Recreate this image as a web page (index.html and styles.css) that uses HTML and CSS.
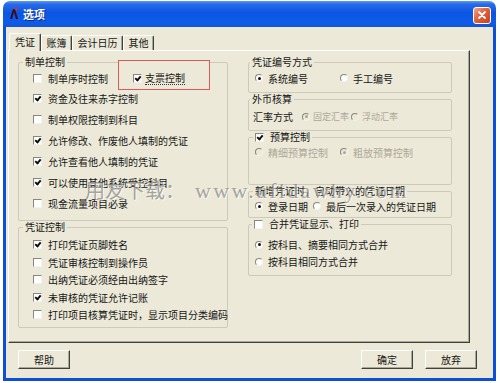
FILE: index.html
```html
<!DOCTYPE html>
<html>
<head>
<meta charset="utf-8">
<title>选项</title>
<link rel="stylesheet" href="styles.css">
</head>
<body>
<div class="window">
  <div class="titlebar">
    <svg class="app-icon" viewBox="0 0 10 12"><path d="M1 11 L4 1 L6 1 L9 11 L7 11 L5 4 L3 11 Z" fill="#3a0a1a"/><path d="M5 1 L9 0 L8 3 Z" fill="#e03030"/></svg>
    <span class="title">选项</span>
    <span class="close"><svg viewBox="0 0 10 10"><path d="M2 2L8 8M8 2L2 8" stroke="#fff" stroke-width="1.8" stroke-linecap="round"/></svg></span>
  </div>
  <div class="frame">
    <div class="tabs">
      <div class="tab sel">凭证</div><div class="tab">账簿</div><div class="tab">会计日历</div><div class="tab">其他</div>
    </div>
    <div class="panel">
      <div class="col col-left">
        <fieldset class="g g1">
          <legend>制单控制</legend>
          <div class="gbody">
            <div class="row first"><span class="item"><i class="cb"></i>制单序时控制</span><span class="item marked"><i class="cb on"></i><span class="focus">支票控制</span></span></div>
            <div class="row"><span class="item"><i class="cb on"></i>资金及往来赤字控制</span></div>
            <div class="row"><span class="item"><i class="cb"></i>制单权限控制到科目</span></div>
            <div class="row"><span class="item"><i class="cb on"></i>允许修改、作废他人填制的凭证</span></div>
            <div class="row"><span class="item"><i class="cb on"></i>允许查看他人填制的凭证</span></div>
            <div class="row"><span class="item"><i class="cb on"></i>可以使用其他系统受控科目</span></div>
            <div class="row"><span class="item"><i class="cb"></i>现金流量项目必录</span></div>
          </div>
        </fieldset>
        <fieldset class="g g2">
          <legend>凭证控制</legend>
          <div class="gbody">
            <div class="row"><span class="item"><i class="cb on"></i>打印凭证页脚姓名</span></div>
            <div class="row"><span class="item"><i class="cb"></i>凭证审核控制到操作员</span></div>
            <div class="row"><span class="item"><i class="cb"></i>出纳凭证必须经由出纳签字</span></div>
            <div class="row"><span class="item"><i class="cb on"></i>未审核的凭证允许记账</span></div>
            <div class="row"><span class="item"><i class="cb"></i>打印项目核算凭证时，显示项目分类编码</span></div>
          </div>
        </fieldset>
      </div>
      <div class="col col-right">
        <fieldset class="g r1">
          <legend>凭证编号方式</legend>
          <div class="gbody">
            <div class="row"><span class="item"><i class="rd on"></i>系统编号</span><span class="item next"><i class="rd"></i>手工编号</span></div>
          </div>
        </fieldset>
        <fieldset class="g r2">
          <legend>外币核算</legend>
          <div class="gbody">
            <div class="row"><span class="item rate-label">汇率方式</span><span class="item dis"><i class="rd on"></i>固定汇率</span><span class="item dis next"><i class="rd"></i>浮动汇率</span></div>
          </div>
        </fieldset>
        <fieldset class="g r3">
          <legend><span class="item"><i class="cb on"></i>预算控制</span></legend>
          <div class="gbody">
            <div class="row"><span class="item dis"><i class="rd"></i>精细预算控制</span><span class="item dis next"><i class="rd on"></i>粗放预算控制</span></div>
          </div>
        </fieldset>
        <fieldset class="g r4">
          <legend>新增凭证时，自动带入的凭证日期</legend>
          <div class="gbody">
            <div class="row"><span class="item"><i class="rd on"></i>登录日期</span><span class="item next"><i class="rd"></i>最后一次录入的凭证日期</span></div>
          </div>
        </fieldset>
        <fieldset class="g r5">
          <legend><span class="item"><i class="cb"></i>合并凭证显示、打印</span></legend>
          <div class="gbody">
            <div class="row"><span class="item"><i class="rd on"></i>按科目、摘要相同方式合并</span></div>
            <div class="row"><span class="item"><i class="rd"></i>按科目相同方式合并</span></div>
          </div>
        </fieldset>
      </div>
    </div>
    <div class="buttons">
      <span class="btn">帮助</span>
      <span class="spacer"></span>
      <span class="btn">确定</span>
      <span class="btn">放弃</span>
    </div>
  </div>
  <div class="watermark"><span class="wm-cn">用友下载：</span><span class="wm-en">www.ufidawhy.com</span></div>
</div>
</body>
</html>
```

FILE: styles.css
```css
* { box-sizing: border-box; }

body {
  margin: 0;
  background: #ffffff;
  font-family: "Noto Sans CJK SC", "Noto Sans", sans-serif;
  font-size: 10px;
  color: #161616;
}

.window {
  position: relative;
  margin: 1px 0 0 3px;
  width: 493px;
  height: 380px;
}

.titlebar {
  height: 26px;
  border-radius: 7px 7px 0 0;
  background: linear-gradient(to bottom, #5a9cf6 0%, #2a6ae8 12%, #0b56e2 45%, #0d5ce8 85%, #1454d2 100%);
  display: flex;
  align-items: center;
  padding: 0 5px 0 6px;
}

.app-icon {
  width: 10px;
  height: 12px;
  margin-right: 4px;
}

.title {
  flex: 1;
  color: #fff;
  font-weight: bold;
  font-size: 11px;
  text-shadow: 1px 1px 0 #0a2a8a;
}

.close {
  width: 18px;
  height: 17px;
  margin-top: 2px;
  border: 1px solid #fff;
  border-radius: 3px;
  background: linear-gradient(135deg, #f2a68a 0%, #e2603a 45%, #c8401c 100%);
  display: flex;
  align-items: center;
  justify-content: center;
}

.close svg {
  width: 10px;
  height: 10px;
}

.frame {
  height: 354px;
  border: 3px solid #0c4fd8;
  border-top: 0;
  background: #ECE9D8;
  display: flex;
  flex-direction: column;
}

.tabs {
  position: relative;
  z-index: 1;
  display: flex;
  align-items: flex-end;
  height: 17px;
  margin: 6px 0 0 3px;
}

.tab {
  height: 15px;
  padding: 0 4.5px;
  border: 1px solid;
  border-color: #ffffff #404040 transparent #ffffff;
  border-bottom: 0;
  border-radius: 2px 2px 0 0;
  box-shadow: inset -1px 0 0 #aca899;
  background: #ECE9D8;
  line-height: 14px;
  white-space: nowrap;
}

.tab.sel {
  height: 18px;
  margin-bottom: -1px;
  padding: 0 5px;
  line-height: 15px;
}

.panel {
  width: 462px;
  height: 293px;
  margin-left: 2px;
  border: 1px solid;
  border-color: #ffffff #404040 #404040 #ffffff;
  box-shadow: inset -1px -1px 0 #aca899;
  padding: 5px 0 0 9px;
  display: flex;
  gap: 20px;
}

.col {
  display: flex;
  flex-direction: column;
}

.col-left { width: 210px; }
.col-right { width: 204px; }

fieldset.g {
  margin: 0;
  padding: 0;
  min-width: 0;
  border: 1px solid #cdcabb;
  border-radius: 2px;
}

fieldset.g legend {
  padding: 0 2px;
  margin-left: 4px;
  height: 12px;
  line-height: 12px;
  font-size: 10px;
  white-space: nowrap;
}

.col-right fieldset.g legend { margin-left: 1px; }
.col-right fieldset.r3 legend,
.col-right fieldset.r4 legend { margin-left: 4px; }
.col-right fieldset.r5 legend { margin-left: 3px; }

.row {
  display: flex;
  height: 21px;
}

.item {
  display: flex;
  align-items: center;
  height: 100%;
  white-space: nowrap;
}

legend .item { height: 12px; }

/* left groups */
.g1 .gbody { padding: 0 0 6px 14px; }
.g1 .row.first { height: 20px; }

.g2 { margin-top: 7px; }
.g2 .gbody { padding: 3px 0 3px 14px; }
.g2 .row { height: 17.5px; }

/* right groups */
.col-right .gbody { padding-left: 6px; }
.r1 .gbody { padding-bottom: 4px; }
.r1 .row { height: 20px; }
.r1 .next { margin-left: 32px; }

.r2 .gbody { padding-bottom: 2px; padding-left: 4px; }
.r2 .row { height: 23px; }
.r2 .rate-label { margin-right: 9px; }
.r2 .dis { font-size: 9px; }
.r2 .dis .rd { margin-right: 3px; }
.r2 .next { margin-left: 2px; }

.r3 { margin-top: 2px; }
.r3 .gbody { padding-bottom: 23px; }
.r3 .row { height: 18px; }
.r3 .next { margin-left: 12px; }

.r4 { margin-top: 7px; }
.r4 .gbody { padding-bottom: 2px; }
.r4 .row { height: 18px; }
.r4 .next { margin-left: 5px; }

.r5 { margin-top: 47px; }
.r5 .gbody { padding: 6px 0 5px 6px; }
.r5 .row { height: 17px; }

/* checkbox */
.cb {
  position: relative;
  flex: none;
  width: 9px;
  height: 9px;
  margin-right: 6px;
  background: #fff;
  border: 1px solid;
  border-color: #8a877a #f4f2ea #f4f2ea #8a877a;
}

.cb.on::after {
  content: "";
  position: absolute;
  left: 2px;
  top: 0px;
  width: 2px;
  height: 4px;
  border: solid #111;
  border-width: 0 2px 2px 0;
  transform: rotate(40deg);
}

/* radio */
.rd {
  position: relative;
  flex: none;
  width: 8px;
  height: 8px;
  margin-right: 5px;
  border-radius: 50%;
  background: #fff;
  border: 1px solid;
  border-color: #8a877a #f4f2ea #f4f2ea #8a877a;
}

.rd.on::after {
  content: "";
  position: absolute;
  left: 1.5px;
  top: 1.5px;
  width: 3px;
  height: 3px;
  border-radius: 50%;
  background: #111;
}

.dis { color: #aca899; }
.dis .rd { background: #ECE9D8; }
.dis .rd.on::after { background: #aca899; }

/* highlighted item */
.marked {
  position: relative;
  z-index: 0;
  margin-left: 25px;
}

.marked::before {
  content: "";
  position: absolute;
  z-index: -1;
  left: -15px;
  top: -8px;
  width: 90px;
  height: 28px;
  border: 1.5px solid #d85a5a;
  background: #ECE9D8;
}

.marked .cb { margin-right: 3px; }

.focus {
  border-bottom: 1px dotted #333;
  line-height: 12px;
}

/* buttons */
.buttons {
  display: flex;
  height: 19px;
  margin-top: 7px;
  padding: 0 16px 0 12px;
  gap: 12px;
}

.spacer { flex: 1; }

.btn {
  width: 52px;
  height: 19px;
  border: 1px solid;
  border-color: #ffffff #404040 #404040 #ffffff;
  box-shadow: inset -1px -1px 0 #aca899;
  background: #ECE9D8;
  text-align: center;
  line-height: 17px;
}

/* watermark */
.watermark {
  position: absolute;
  left: 82px;
  top: 176px;
  height: 26px;
  line-height: 26px;
  white-space: nowrap;
  color: rgba(110, 110, 110, 0.6);
  text-shadow: 1px 1px 0 rgba(255, 255, 255, 0.7);
  pointer-events: none;
}

.wm-cn {
  font-size: 20px;
  letter-spacing: 0;
}

.wm-en {
  margin-left: 10px;
  font-family: "Liberation Serif", serif;
  font-size: 22px;
  letter-spacing: 2.3px;
}
```
